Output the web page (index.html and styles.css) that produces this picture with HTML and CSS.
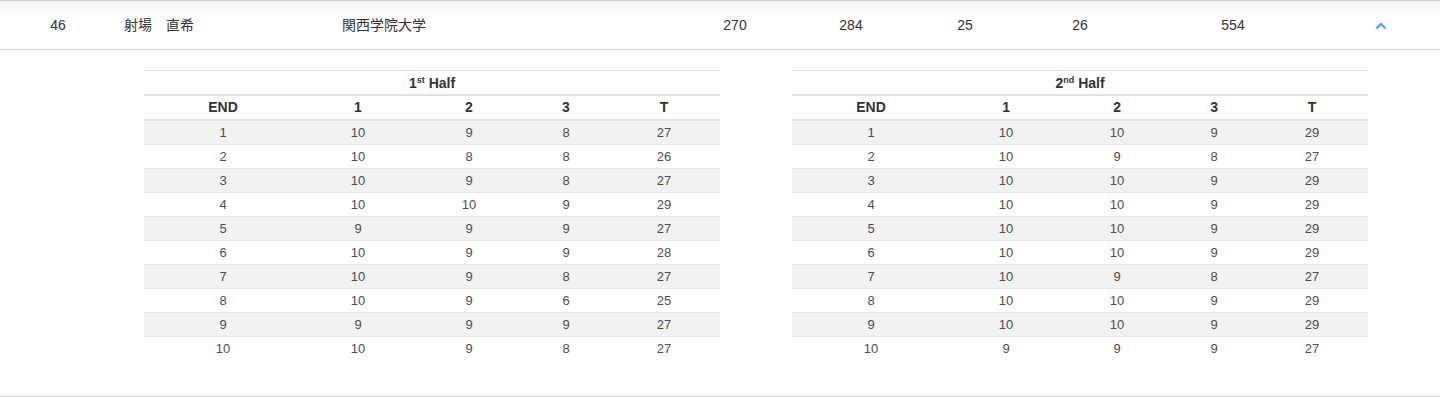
FILE: index.html
```html
<!DOCTYPE html>
<html lang="ja">
<head>
<meta charset="utf-8">
<link rel="stylesheet" href="styles.css">
</head>
<body>
<div class="summary">
  <div class="c c-rank">46</div>
  <div class="c c-name">射場　直希</div>
  <div class="c c-school">関西学院大学</div>
  <div class="c c-n1">270</div>
  <div class="c c-n2">284</div>
  <div class="c c-n3">25</div>
  <div class="c c-n4">26</div>
  <div class="c c-n5">554</div>
  <div class="c c-toggle">
    <svg width="12" height="8" viewBox="0 0 12 8"><polyline points="1.5,6.5 6,2 10.5,6.5" fill="none" stroke="#4aa8f5" stroke-width="2.4" stroke-linejoin="miter"/></svg>
  </div>
</div>
<div class="detail">
  <table class="score">
    <colgroup><col class="w-end"><col class="w-1"><col class="w-2"><col class="w-3"><col class="w-t"></colgroup>
    <thead>
      <tr class="cap"><th colspan="5">1<sup>st</sup> Half</th></tr>
      <tr class="hdr"><th>END</th><th>1</th><th>2</th><th>3</th><th>T</th></tr>
    </thead>
    <tbody>
      <tr><td>1</td><td>10</td><td>9</td><td>8</td><td>27</td></tr>
      <tr><td>2</td><td>10</td><td>8</td><td>8</td><td>26</td></tr>
      <tr><td>3</td><td>10</td><td>9</td><td>8</td><td>27</td></tr>
      <tr><td>4</td><td>10</td><td>10</td><td>9</td><td>29</td></tr>
      <tr><td>5</td><td>9</td><td>9</td><td>9</td><td>27</td></tr>
      <tr><td>6</td><td>10</td><td>9</td><td>9</td><td>28</td></tr>
      <tr><td>7</td><td>10</td><td>9</td><td>8</td><td>27</td></tr>
      <tr><td>8</td><td>10</td><td>9</td><td>6</td><td>25</td></tr>
      <tr><td>9</td><td>9</td><td>9</td><td>9</td><td>27</td></tr>
      <tr><td>10</td><td>10</td><td>9</td><td>8</td><td>27</td></tr>
    </tbody>
  </table>
  <table class="score">
    <colgroup><col class="w-end"><col class="w-1"><col class="w-2"><col class="w-3"><col class="w-t"></colgroup>
    <thead>
      <tr class="cap"><th colspan="5">2<sup>nd</sup> Half</th></tr>
      <tr class="hdr"><th>END</th><th>1</th><th>2</th><th>3</th><th>T</th></tr>
    </thead>
    <tbody>
      <tr><td>1</td><td>10</td><td>10</td><td>9</td><td>29</td></tr>
      <tr><td>2</td><td>10</td><td>9</td><td>8</td><td>27</td></tr>
      <tr><td>3</td><td>10</td><td>10</td><td>9</td><td>29</td></tr>
      <tr><td>4</td><td>10</td><td>10</td><td>9</td><td>29</td></tr>
      <tr><td>5</td><td>10</td><td>10</td><td>9</td><td>29</td></tr>
      <tr><td>6</td><td>10</td><td>10</td><td>9</td><td>29</td></tr>
      <tr><td>7</td><td>10</td><td>9</td><td>8</td><td>27</td></tr>
      <tr><td>8</td><td>10</td><td>10</td><td>9</td><td>29</td></tr>
      <tr><td>9</td><td>10</td><td>10</td><td>9</td><td>29</td></tr>
      <tr><td>10</td><td>9</td><td>9</td><td>9</td><td>27</td></tr>
    </tbody>
  </table>
</div>
</body>
</html>
```
FILE: styles.css
```css
html, body {
  margin: 0;
  padding: 0;
  background: #fff;
}
body {
  font-family: "Liberation Sans", "Noto Sans CJK JP", Arial, sans-serif;
  color: #333;
  font-size: 13px;
}
.summary {
  display: flex;
  height: 48px;
  align-items: center;
  border-top: 1px solid #d2d2d2;
  background: linear-gradient(#f3f3f3 0, #fff 18px);
}
.c {
  font-size: 14px;
  line-height: 48px;
  height: 48px;
  flex: none;
}
.c-rank { width: 116px; text-align: center; }
.c-name { width: 210px; padding-left: 8px; }
.c-school { width: 335px; padding-left: 8px; }
.c-n1 { width: 116px; text-align: center; }
.c-n2 { width: 116px; text-align: center; }
.c-n3 { width: 112px; text-align: center; }
.c-n4 { width: 118px; text-align: center; }
.c-n5 { width: 188px; text-align: center; }
.c-toggle {
  width: 108px;
  display: flex;
  align-items: center;
  justify-content: center;
}
.c-toggle svg { display: block; margin-top: 1px; }

.detail {
  display: flex;
  gap: 72px;
  padding: 20px 72px 36px 144px;
  border-top: 1px solid #d2d2d2;
  border-bottom: 1px solid #cfcfcf;
}
.score {
  width: 576px;
  border-collapse: collapse;
  table-layout: fixed;
  border-top: 1px solid #e3e3e3;
}
.w-end { width: 158px; }
.w-1 { width: 112px; }
.w-2 { width: 110px; }
.w-3 { width: 84px; }
.w-t { width: 112px; }
.score th, .score td {
  padding: 0;
  text-align: center;
  height: 23px;
  line-height: 23px;
  font-size: 13px;
}
.score th {
  font-weight: bold;
  color: #333;
  font-size: 14px;
}
.cap th {
  padding-top: 2px;
  height: 21px;
  line-height: 21px;
}
.score thead tr {
  border-bottom: 2px solid #dde2e6;
}
.score tbody tr {
  border-bottom: 1px solid #dfe5ea;
}
.score tbody tr:last-child {
  border-bottom: none;
}
.score tbody tr:nth-child(odd) td {
  background: #f2f2f2;
}
.score td {
  color: #4d4d4d;
}
.cap sup {
  font-size: 9px;
  line-height: 0;
  vertical-align: 5px;
  font-weight: bold;
}
```
